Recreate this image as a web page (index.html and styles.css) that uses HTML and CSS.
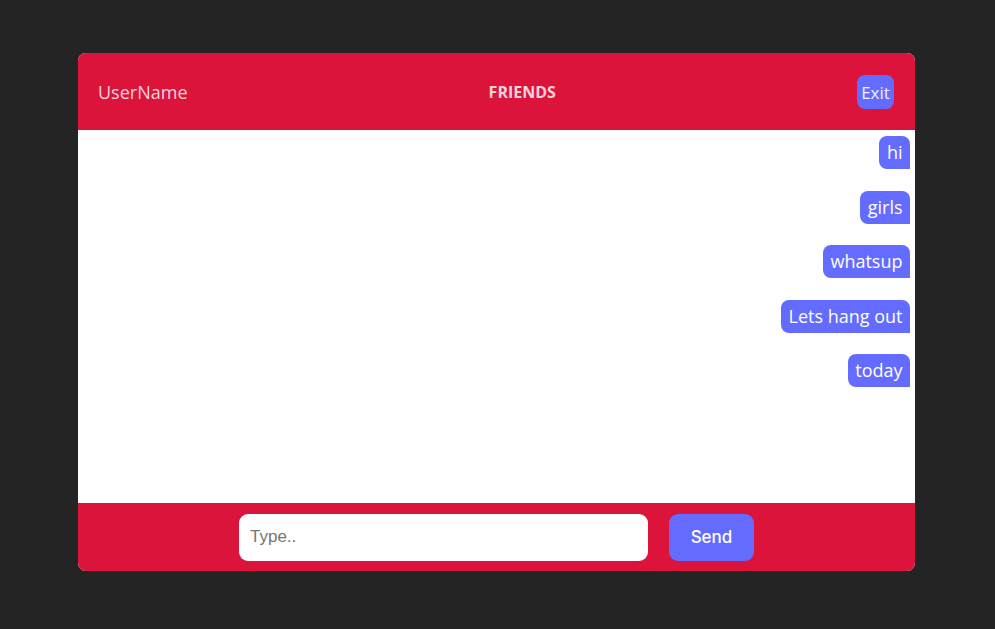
FILE: index.html
```html
<!DOCTYPE html>
<html>
<head>
<meta charset="utf-8">
<link rel="stylesheet" href="styles.css">
</head>
<body>
<div class="chat">
  <header class="chat-header">
    <span class="user">UserName</span>
    <span class="title">FRIENDS</span>
    <button class="exit">Exit</button>
  </header>
  <main class="messages">
    <div class="msg">hi</div>
    <div class="msg">girls</div>
    <div class="msg">whatsup</div>
    <div class="msg">Lets hang out</div>
    <div class="msg">today</div>
  </main>
  <footer class="chat-footer">
    <input class="input" type="text" placeholder="Type..">
    <button class="send">Send</button>
  </footer>
</div>
</body>
</html>
```
FILE: styles.css
```css
html, body {
  margin: 0;
  padding: 0;
  height: 100%;
}
body {
  background: #242424;
  font-family: "Open Sans", "Liberation Sans", sans-serif;
  display: flex;
  justify-content: center;
  align-items: flex-start;
}
.chat {
  margin-top: 53px;
  margin-left: -2px;
  width: 837px;
  height: 518px;
  border-radius: 8px;
  overflow: hidden;
  display: flex;
  flex-direction: column;
  background: #fff;
}
.chat-header {
  height: 77px;
  flex: none;
  background: #dc143c;
  display: flex;
  align-items: center;
  justify-content: space-between;
  padding: 0 21px 0 20px;
  box-sizing: border-box;
}
.user {
  color: #f7d3da;
  font-size: 18px;
}
.title {
  color: #f7d3da;
  font-size: 16px;
  font-weight: 700;
}
.exit {
  background: #646cff;
  color: #f3f0ff;
  border: none;
  border-radius: 8px;
  height: 34px;
  width: 37px;
  padding: 0;
  font-family: inherit;
  font-size: 17px;
  margin-top: 1px;
}
.messages {
  flex: 1;
  display: flex;
  flex-direction: column;
  align-items: flex-end;
  padding: 6px 5px 0 0;
  gap: 21.5px;
}
.msg {
  background: #646cff;
  color: #fff;
  font-size: 18px;
  height: 33px;
  line-height: 33px;
  padding: 0 7.5px;
  border-radius: 8px 8px 0 8px;
}
.chat-footer {
  height: 68px;
  flex: none;
  background: #dc143c;
  display: flex;
  align-items: center;
  justify-content: center;
  gap: 21px;
}
.input {
  width: 409px;
  height: 47px;
  box-sizing: border-box;
  border: none;
  border-radius: 9px;
  padding: 0 11px;
  font-family: "Liberation Sans", Arial, sans-serif;
  font-size: 17px;
  outline: none;
}
.input::placeholder {
  color: #757575;
}
.send {
  width: 85px;
  height: 47px;
  border: none;
  border-radius: 9px;
  background: #646cff;
  color: #fff;
  font-family: Inter, "Open Sans", sans-serif;
  font-weight: 500;
  font-size: 17px;
}
```
